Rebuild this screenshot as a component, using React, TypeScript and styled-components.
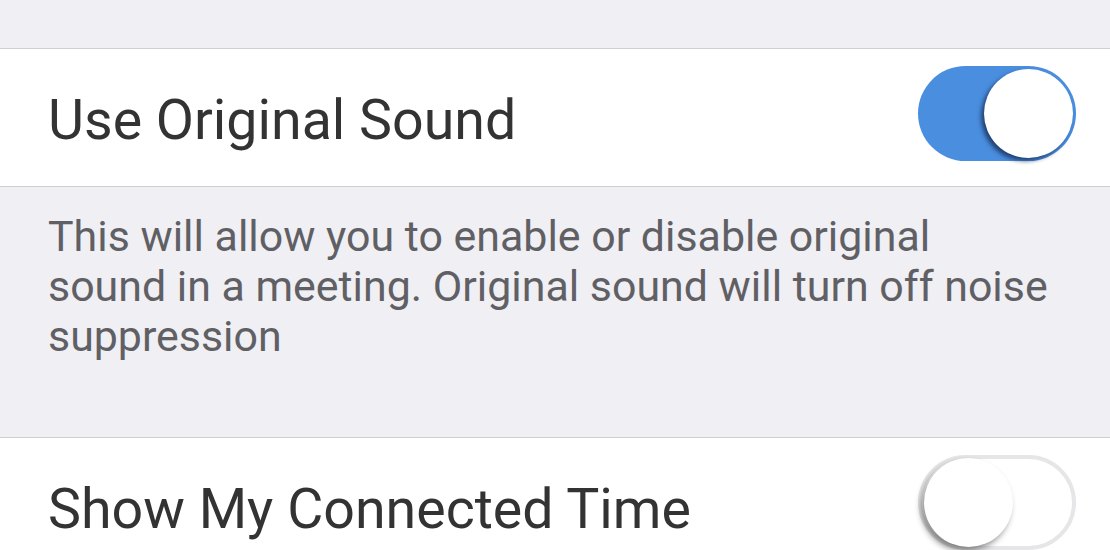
import React, { useState } from "react";
import styled, { createGlobalStyle } from "styled-components";

const GlobalStyle = createGlobalStyle`
  html, body {
    margin: 0;
    padding: 0;
    background-color: #efeff4;
    font-family: Roboto, "Noto Sans", "Liberation Sans", sans-serif;
  }
`;

const App = () => {
  const [original, setOriginal] = useState(true);
  const [connected, setConnected] = useState(false);

  return (
    <Container>
      <GlobalStyle />
      <TopGap />
      <Row>
        <Label>Use Original Sound</Label>
        <Toggle on={original} onClick={() => setOriginal(!original)}>
          <Knob on={original} />
        </Toggle>
      </Row>
      <Description>
        This will allow you to enable or disable original
        <br />
        sound in a meeting. Original sound will turn off noise
        <br />
        suppression
      </Description>
      <Row>
        <Label>Show My Connected Time</Label>
        <Toggle on={connected} onClick={() => setConnected(!connected)}>
          <Knob on={connected} />
        </Toggle>
      </Row>
    </Container>
  );
};

export default App;

const Container = styled.div`
  width: 100%;
  height: 550px;
  overflow: hidden;
  display: flex;
  flex-direction: column;
  background-color: #efeff4;
`;
const TopGap = styled.div`
  height: 48px;
  flex-shrink: 0;
  border-bottom: 1px solid #cfcfd3;
`;
const Row = styled.div`
  height: 138px;
  flex-shrink: 0;
  padding: 17px 34px 0 48px;
  box-sizing: border-box;
  display: flex;
  justify-content: space-between;
  align-items: flex-start;
  background-color: #ffffff;
  border-bottom: 1px solid #cfcfd3;
`;
const Label = styled.div`
  font-size: 55.5px;
  line-height: 95px;
  color: #333333;
  margin-top: 7px;
  white-space: nowrap;
`;
const Description = styled.div`
  height: 251px;
  flex-shrink: 0;
  box-sizing: border-box;
  padding: 24px 20px 0 48px;
  font-size: 42.9px;
  line-height: 50px;
  color: #606064;
  white-space: nowrap;
  border-bottom: 1px solid #cfcfd3;
`;
const Toggle = styled.div<{ on: boolean }>`
  position: relative;
  width: 158px;
  height: 95px;
  border-radius: 48px;
  box-sizing: border-box;
  background-color: ${(p) => (p.on ? "#4a8ee0" : "#ffffff")};
  border: ${(p) => (p.on ? "none" : "4px solid #e6e6e8")};
  cursor: pointer;
`;
const Knob = styled.div<{ on: boolean }>`
  position: absolute;
  top: ${(p) => (p.on ? "3px" : "-1px")};
  left: ${(p) => (p.on ? "66px" : "2px")};
  width: 89px;
  height: 89px;
  border-radius: 50%;
  background-color: #ffffff;
  box-shadow: ${(p) =>
    p.on
      ? "-3px 3px 4px rgba(20, 40, 80, 0.75)"
      : "-3px 4px 6px rgba(0, 0, 0, 0.45)"};
`;
